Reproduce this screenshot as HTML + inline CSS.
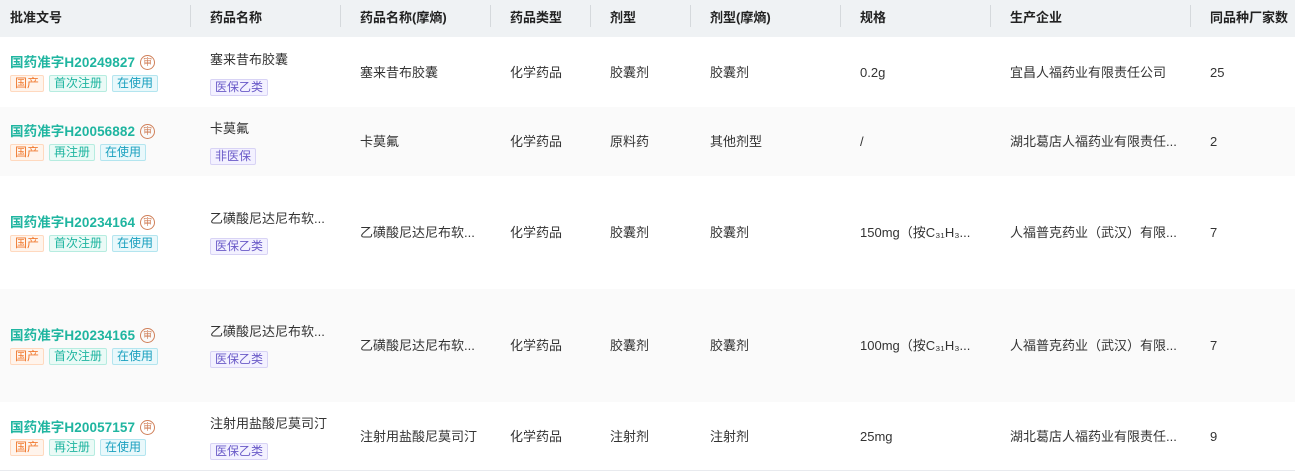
<!DOCTYPE html>
<html><head><meta charset="utf-8"><style>
*{margin:0;padding:0;box-sizing:border-box}
body{width:1295px;height:471px;background:#fff;font-family:"Liberation Sans","Noto Sans CJK SC",sans-serif;color:#333;font-size:13px;position:relative;overflow:hidden}
.hdr{position:absolute;left:0;top:0;width:1295px;height:37px;background:#eff2f4}
.h{position:absolute;top:0;line-height:35px;font-weight:bold;color:#222;font-size:13px}
.sep{position:absolute;top:5px;width:1px;height:22px;background:#d5d9dc}
.row{position:absolute;left:0;width:1295px}
.t{position:absolute;white-space:nowrap;line-height:16px}
.ap{position:absolute;left:10px;color:#1fb5a0;font-weight:bold;font-size:13.5px;line-height:16px;white-space:nowrap;letter-spacing:0.1px}
.seal{display:inline-block;width:15px;height:15px;border:1px solid #d0805a;border-radius:50%;color:#d0805a;font-size:9px;line-height:13px;text-align:center;font-weight:normal;vertical-align:top;margin-left:5px}
.tag{position:absolute;height:17px;line-height:15px;font-size:12px;border:1px solid;border-radius:2px;padding:0 4px;white-space:nowrap}
.o{background:#fff4ec;border-color:#ffd9bf;color:#f07a30}
.g{background:#eafaf6;border-color:#b6ece0;color:#1fb5a0}
.b{background:#e9f8fb;border-color:#b3e5ef;color:#1aa0bf}
.p{background:#f3f1ff;border-color:#d8d3f5;color:#6a5ac8}
</style></head><body>
<div class="hdr"></div>
<div class="h" style="left:10px">批准文号</div>
<div class="h" style="left:210px">药品名称</div>
<div class="h" style="left:360px">药品名称(摩熵)</div>
<div class="h" style="left:510px">药品类型</div>
<div class="h" style="left:610px">剂型</div>
<div class="h" style="left:710px">剂型(摩熵)</div>
<div class="h" style="left:860px">规格</div>
<div class="h" style="left:1010px">生产企业</div>
<div class="h" style="left:1210px">同品种厂家数</div>
<div class="sep" style="left:190px"></div><div class="sep" style="left:340px"></div><div class="sep" style="left:490px"></div><div class="sep" style="left:590px"></div><div class="sep" style="left:690px"></div><div class="sep" style="left:840px"></div><div class="sep" style="left:990px"></div><div class="sep" style="left:1190px"></div>

<div class="row" style="top:107px;height:69px;background:#fafafa"></div>
<div class="row" style="top:289px;height:113px;background:#fafafa"></div>
<div class="row" style="top:470px;height:1px;background:#e8eaee"></div>

<!-- row1 -->
<div class="ap" style="top:55px">国药准字H20249827<span class="seal">审</span></div>
<div class="tag o" style="left:10px;top:75px">国产</div><div class="tag g" style="left:49px;top:75px">首次注册</div><div class="tag b" style="left:112px;top:75px">在使用</div>
<div class="t" style="left:210px;top:52px">塞来昔布胶囊</div>
<div class="tag p" style="left:210px;top:79px">医保乙类</div>
<div class="t" style="left:360px;top:65px">塞来昔布胶囊</div><div class="t" style="left:510px;top:65px">化学药品</div><div class="t" style="left:610px;top:65px">胶囊剂</div><div class="t" style="left:710px;top:65px">胶囊剂</div><div class="t" style="left:860px;top:65px">0.2g</div><div class="t" style="left:1010px;top:65px">宜昌人福药业有限责任公司</div><div class="t" style="left:1210px;top:65px">25</div>

<!-- row2 -->
<div class="ap" style="top:124px">国药准字H20056882<span class="seal">审</span></div>
<div class="tag o" style="left:10px;top:144px">国产</div><div class="tag g" style="left:49px;top:144px">再注册</div><div class="tag b" style="left:100px;top:144px">在使用</div>
<div class="t" style="left:210px;top:121px">卡莫氟</div>
<div class="tag p" style="left:210px;top:148px">非医保</div>
<div class="t" style="left:360px;top:134px">卡莫氟</div><div class="t" style="left:510px;top:134px">化学药品</div><div class="t" style="left:610px;top:134px">原料药</div><div class="t" style="left:710px;top:134px">其他剂型</div><div class="t" style="left:860px;top:134px">/</div><div class="t" style="left:1010px;top:134px">湖北葛店人福药业有限责任...</div><div class="t" style="left:1210px;top:134px">2</div>

<!-- row3 -->
<div class="ap" style="top:215px">国药准字H20234164<span class="seal">审</span></div>
<div class="tag o" style="left:10px;top:235px">国产</div><div class="tag g" style="left:49px;top:235px">首次注册</div><div class="tag b" style="left:112px;top:235px">在使用</div>
<div class="t" style="left:210px;top:211px">乙磺酸尼达尼布软...</div>
<div class="tag p" style="left:210px;top:238px">医保乙类</div>
<div class="t" style="left:360px;top:225px">乙磺酸尼达尼布软...</div><div class="t" style="left:510px;top:225px">化学药品</div><div class="t" style="left:610px;top:225px">胶囊剂</div><div class="t" style="left:710px;top:225px">胶囊剂</div><div class="t" style="left:860px;top:225px">150mg（按C₃₁H₃...</div><div class="t" style="left:1010px;top:225px">人福普克药业（武汉）有限...</div><div class="t" style="left:1210px;top:225px">7</div>

<!-- row4 -->
<div class="ap" style="top:328px">国药准字H20234165<span class="seal">审</span></div>
<div class="tag o" style="left:10px;top:348px">国产</div><div class="tag g" style="left:49px;top:348px">首次注册</div><div class="tag b" style="left:112px;top:348px">在使用</div>
<div class="t" style="left:210px;top:324px">乙磺酸尼达尼布软...</div>
<div class="tag p" style="left:210px;top:351px">医保乙类</div>
<div class="t" style="left:360px;top:338px">乙磺酸尼达尼布软...</div><div class="t" style="left:510px;top:338px">化学药品</div><div class="t" style="left:610px;top:338px">胶囊剂</div><div class="t" style="left:710px;top:338px">胶囊剂</div><div class="t" style="left:860px;top:338px">100mg（按C₃₁H₃...</div><div class="t" style="left:1010px;top:338px">人福普克药业（武汉）有限...</div><div class="t" style="left:1210px;top:338px">7</div>

<!-- row5 -->
<div class="ap" style="top:420px">国药准字H20057157<span class="seal">审</span></div>
<div class="tag o" style="left:10px;top:439px">国产</div><div class="tag g" style="left:49px;top:439px">再注册</div><div class="tag b" style="left:100px;top:439px">在使用</div>
<div class="t" style="left:210px;top:416px">注射用盐酸尼莫司汀</div>
<div class="tag p" style="left:210px;top:443px">医保乙类</div>
<div class="t" style="left:360px;top:429px">注射用盐酸尼莫司汀</div><div class="t" style="left:510px;top:429px">化学药品</div><div class="t" style="left:610px;top:429px">注射剂</div><div class="t" style="left:710px;top:429px">注射剂</div><div class="t" style="left:860px;top:429px">25mg</div><div class="t" style="left:1010px;top:429px">湖北葛店人福药业有限责任...</div><div class="t" style="left:1210px;top:429px">9</div>
</body></html>
